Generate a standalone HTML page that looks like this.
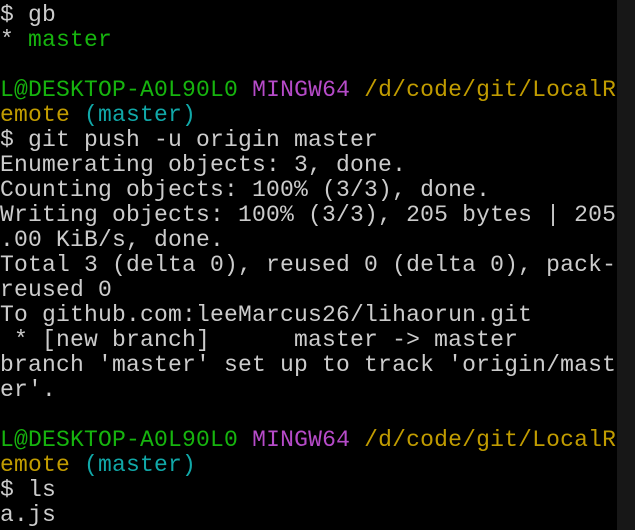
<!DOCTYPE html>
<html><head><meta charset="utf-8"><style>
html,body{margin:0;padding:0;background:#000;width:635px;height:530px;overflow:hidden}
.sb{position:absolute;left:617px;top:0;width:18px;height:530px;background:#171717}
pre{margin:0;position:absolute;left:0;top:3px;font-family:"Liberation Mono",monospace;font-size:23px;letter-spacing:0.2px;line-height:25px;color:#cccccc;white-space:pre}
.g{color:#16b40e}.y{color:#c19c00}.m{color:#b64bc9}.c{color:#11a8a8}
</style></head><body>
<pre>$ gb
* <span class="g">master</span>

<span class="g">L@DESKTOP-A0L90L0</span> <span class="m">MINGW64</span> <span class="y">/d/code/git/LocalR</span>
<span class="y">emote</span> <span class="c">(master)</span>
$ git push -u origin master
Enumerating objects: 3, done.
Counting objects: 100% (3/3), done.
Writing objects: 100% (3/3), 205 bytes | 205
.00 KiB/s, done.
Total 3 (delta 0), reused 0 (delta 0), pack-
reused 0
To github.com:leeMarcus26/lihaorun.git
 * [new branch]      master -&gt; master
branch 'master' set up to track 'origin/mast
er'.

<span class="g">L@DESKTOP-A0L90L0</span> <span class="m">MINGW64</span> <span class="y">/d/code/git/LocalR</span>
<span class="y">emote</span> <span class="c">(master)</span>
$ ls
a.js</pre>
<div class="sb"></div>
</body></html>
